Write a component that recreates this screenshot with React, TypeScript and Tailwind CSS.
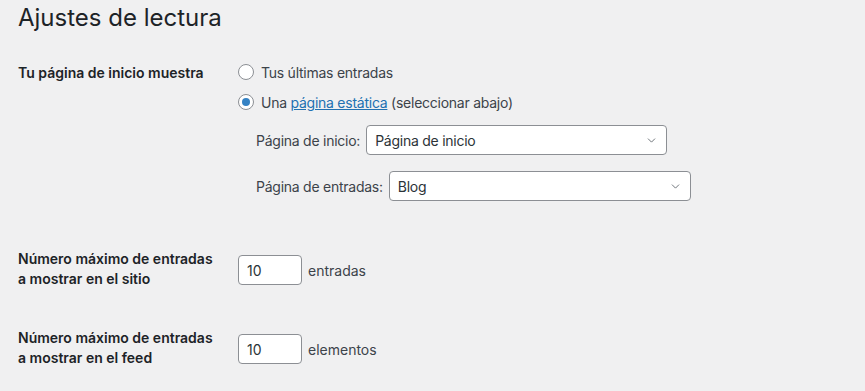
import { ChevronDown } from "lucide-react"

const Radio = ({ checked }: { checked?: boolean }) => (
	<span className="flex items-center justify-center w-4 h-4 rounded-full border border-[#8c8f94] bg-white shrink-0">
		{checked && <span className="w-2 h-2 rounded-full bg-[#3582c4]" />}
	</span>
)

const Select = ({ value, width }: { value: string; width: string }) => (
	<div className={`flex items-center justify-between h-[30px] ${width} pl-2 pr-[8px] bg-white border border-[#8c8f94] rounded-[4px] text-[14px] text-[#2c3338]`}>
		<span>{value}</span>
		<ChevronDown size={13} strokeWidth={1.5} className="text-[#50575e]" />
	</div>
)

const NumberRow = ({ line1, line2, unit }: { line1: string; line2: string; unit: string }) => (
	<div className="flex">
		<div className="w-[220px] font-semibold text-[14px] leading-[20px] text-[#1d2327]">
			<div>{line1}</div>
			<div>{line2}</div>
		</div>
		<div className="flex items-center gap-[6px] mt-[6px] h-[30px]">
			<div className="flex items-center w-[64px] h-[30px] px-2 bg-white border border-[#8c8f94] rounded-[4px] text-[14px] text-[#2c3338]">10</div>
			<span className="text-[14px] text-[#3c434a]">{unit}</span>
		</div>
	</div>
)

export default function App() {
	return (
		<div className="w-full h-[391px] bg-[#f0f0f1] pl-[18px] pt-[2px] font-['Inter',sans-serif] overflow-hidden">
			<h1 className="text-[24px] leading-[31px] font-normal text-[#1d2327]">Ajustes de lectura</h1>

			{/* Front page displays */}
			<div className="flex mt-[24px]">
				<div className="w-[220px] h-[30px] flex items-center font-semibold text-[14px] text-[#1d2327]">Tu página de inicio muestra</div>
				<div className="flex flex-col tracking-[-0.25px]">
					<label className="flex items-center gap-[7px] h-[30px] text-[14px] text-[#3c434a]">
						<Radio /> Tus últimas entradas
					</label>
					<label className="flex items-center gap-[7px] h-[30px] text-[14px] text-[#3c434a]">
						<Radio checked />
						<span>Una <a className="text-[#2271b1] underline">página estática</a> (seleccionar abajo)</span>
					</label>
					<div className="flex flex-col gap-4 mt-2 ml-[18px]">
						<div className="flex items-center gap-[6px] text-[14px] text-[#3c434a]">
							<span>Página de inicio:</span>
							<Select value="Página de inicio" width="w-[301px]" />
						</div>
						<div className="flex items-center gap-[6px] text-[14px] text-[#3c434a]">
							<span>Página de entradas:</span>
							<Select value="Blog" width="w-[302px]" />
						</div>
					</div>
				</div>
			</div>

			<div className="mt-[48px]">
				<NumberRow line1="Número máximo de entradas" line2="a mostrar en el sitio" unit="entradas" />
			</div>
			<div className="mt-[39px]">
				<NumberRow line1="Número máximo de entradas" line2="a mostrar en el feed" unit="elementos" />
			</div>
		</div>
	)
}
